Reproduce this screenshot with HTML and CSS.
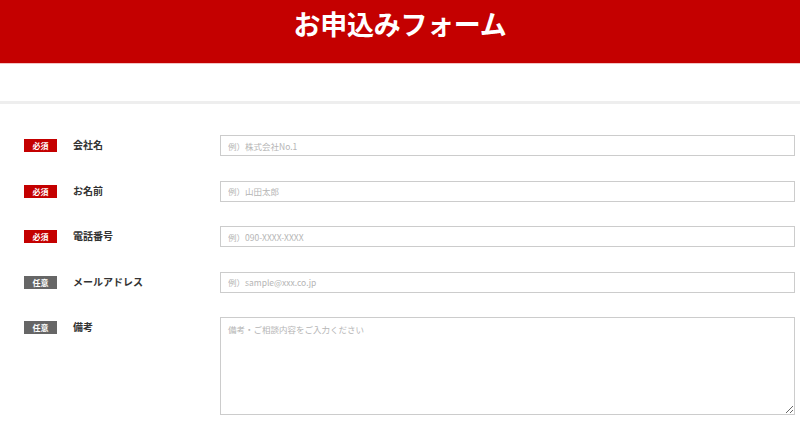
FILE: index.html
```html
<!DOCTYPE html>
<html lang="ja">
  <head>
    <meta charset="UTF-8" />
    <meta name="viewport" content="width=device-width, initial-scale=1.0" />
    <title>お申込みフォーム</title>
    <link rel="stylesheet" href="styles.css">
  </head>
  <body>
    <div class="header">
      <h1>お申込みフォーム</h1>
    </div>
    <div class="spacer"></div>

    <form class="entry-form">
      <div class="form-row">
        <span class="badge required">必須</span>
        <label class="label" for="company">会社名</label>
        <input type="text" id="company" placeholder="例）株式会社No.1" />
      </div>

      <div class="form-row">
        <span class="badge required">必須</span>
        <label class="label" for="name">お名前</label>
        <input type="text" id="name" placeholder="例）山田太郎" />
      </div>

      <div class="form-row">
        <span class="badge required">必須</span>
        <label class="label" for="tel">電話番号</label>
        <input type="tel" id="tel" placeholder="例）090-XXXX-XXXX" />
      </div>

      <div class="form-row">
        <span class="badge optional">任意</span>
        <label class="label" for="email">メールアドレス</label>
        <input type="email" id="email" placeholder="例）sample@xxx.co.jp" />
      </div>

      <div class="form-row">
        <span class="badge optional">任意</span>
        <label class="label" for="note">備考</label>
        <textarea id="note" placeholder="備考・ご相談内容をご入力ください"></textarea>
      </div>
    </form>
  </body>
</html>
```

FILE: styles.css
```css
* {
  margin: 0;
  padding: 0;
  box-sizing: border-box;
}

body {
  font-family: "Noto Sans CJK JP", "Noto Sans", sans-serif;
  background: #fff;
  color: #333;
  overflow: hidden;
}

.header {
  background: #c40000;
  height: 64px;
  padding-top: 7px;
  text-align: center;
  border-bottom: 1px solid #f3c4c4;
}

h1 {
  font-size: 27px;
  line-height: 34px;
  font-weight: 700;
  color: #fff;
  letter-spacing: -0.3px;
}

.spacer {
  height: 40px;
  border-bottom: 3px solid #eeeeee;
}

.entry-form {
  display: flex;
  flex-direction: column;
  gap: 24.5px;
  padding: 31px 5px 0 24px;
}

.form-row {
  display: flex;
  align-items: flex-start;
}

.badge {
  flex: none;
  width: 33px;
  height: 13px;
  margin-top: 4px;
  font-size: 8px;
  line-height: 13px;
  font-weight: 700;
  color: #fff;
  text-align: center;
}

.required {
  background: #c40000;
}

.optional {
  background: #666;
}

.label {
  flex: none;
  width: 147px;
  margin-left: 16px;
  font-size: 10px;
  line-height: 19px;
  font-weight: 700;
  color: #333;
}

input,
textarea {
  flex: 1;
  min-width: 0;
  height: 21px;
  padding: 0 7px;
  border: 1px solid #cccccc;
  font-family: inherit;
  font-size: 8.5px;
  color: #333;
  background: #fff;
}

textarea {
  height: 98px;
  padding: 5px 7px;
  line-height: 12px;
}

input::placeholder,
textarea::placeholder {
  color: #b5b5b5;
}
```
